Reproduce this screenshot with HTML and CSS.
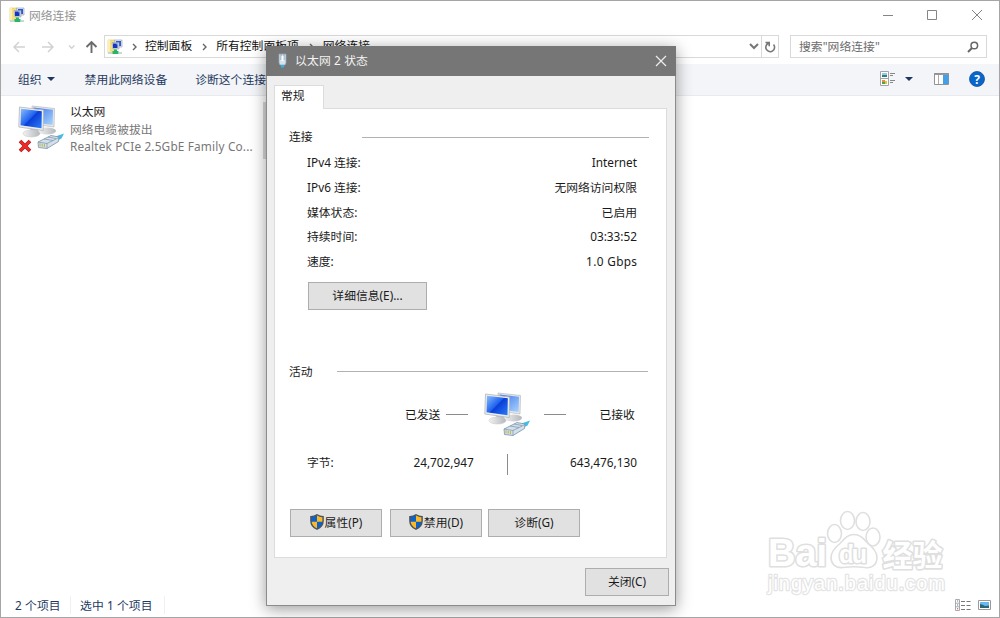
FILE: index.html
```html
<!DOCTYPE html>
<html lang="zh-CN">
<head>
<meta charset="utf-8">
<title>网络连接</title>
<link rel="stylesheet" href="styles.css">
</head>
<body>
<svg width="0" height="0" class="defs">
  <defs>
    <linearGradient id="screen" x1="0" y1="0" x2="1" y2=".9"><stop offset="0" stop-color="#8cc0fd"/><stop offset=".5" stop-color="#1d60ee"/><stop offset=".53" stop-color="#0a3ed6"/><stop offset="1" stop-color="#2877f6"/></linearGradient>
    <linearGradient id="screen2" x1="0" y1="0" x2="1" y2="1"><stop offset="0" stop-color="#3e73ea"/><stop offset="1" stop-color="#a8d4fd"/></linearGradient>
    <linearGradient id="base" x1="0" y1="0" x2="1" y2="0"><stop offset="0" stop-color="#f1f1f1"/><stop offset="1" stop-color="#b4b8bc"/></linearGradient>
    <symbol id="net" viewBox="0 0 46 46">
      <ellipse cx="29" cy="26" rx="9" ry="3.400" fill="url(#base)"/>
      <path d="M14 1 36.500 3.500 36 22 15 19z" fill="#e4e7e9" stroke="#b6babf" stroke-width=".7"/>
      <path d="M15.500 2.600 35 4.800 34.600 20 16 17.500z" fill="url(#screen2)"/>
      <path d="m12 22 8 1 1 6-8 1z" fill="#bfc3c7"/>
      <ellipse cx="13.500" cy="28.500" rx="8.500" ry="3.500" fill="url(#base)" stroke="#c2c4c7" stroke-width=".5"/>
      <path d="M1.500 2 25.500 5 25.200 25.500 .8 22z" fill="#eceeef" stroke="#b1b5b9" stroke-width=".8"/>
      <path d="M3 3.700 23.800 6.300 23.500 23.200 2.500 20.200z" fill="url(#screen)"/>
      <path d="m36 32 10-3.500-2.500 5-6 3z" fill="#43bde5"/>
      <path d="m20 37 13-6.500 8 1.500-.5 4.500L29 43.500l-8.500-1z" fill="#d3dfe9" stroke="#7893ab" stroke-width=".8"/>
      <path d="m20 37 9 1.500 12-6M29 38.500v5M26 34l9 1.500M30 32l8 1.500" fill="none" stroke="#7893ab" stroke-width=".7"/>
      <path d="M22 38.300v3M24.200 38.700v3M26.400 39v3" stroke="#c0b646"/>
    </symbol>
    <symbol id="folder" viewBox="0 0 16 16">
      <path d="M1 1h7v13H1z" fill="#f4df83" stroke="#dfc35b" stroke-width=".6"/><path d="M1 1h2v13H1z" fill="#fbefb5"/>
      <path d="M7.500 1H15v7H8z" fill="#dfe4e8" stroke="#9fa9b3" stroke-width=".7"/><path d="M9 2h5v5H9z" fill="#2a5ad6"/>
      <path d="M5 3.500h7V10H6z" fill="#d5dbe1" stroke="#929ca7" stroke-width=".6"/><path d="M6 4.500h4.500V9H6z" fill="#1533c4"/><path d="m8.500 4.500 2 1.500v-1.500z" fill="#8fc2f8"/>
      <path d="M7 10.500h3V12h1.500v3h-6v-3H7z" fill="#28b56b"/><path d="M1 13h4v2H1zM12 13h3v2h-3z" fill="#c5dad0"/>
    </symbol>
    <symbol id="shield" viewBox="0 0 14 16">
      <path d="M7 .8C5 2.200 3 2.700.9 2.700V7c0 4 2.500 6.700 6.100 8.200C10.600 13.700 13.100 11 13.100 7V2.700C11 2.700 9 2.200 7 .8z" fill="#0d62c9"/>
      <path d="M7 .8C9 2.200 11 2.700 13.100 2.700V7.800H7zM7 7.800v7.400C3.900 13.800 1.500 11.500 1 7.800z" fill="#fbb827"/>
      <path d="M7 .8C5 2.200 3 2.700.9 2.700V7c0 4 2.500 6.700 6.100 8.200C10.600 13.700 13.100 11 13.100 7V2.700C11 2.700 9 2.200 7 .8z" fill="none" stroke="#49545f" stroke-width="1.400"/>
    </symbol>
  </defs>
</svg>
<main class="window">
  <header class="titlebar">
    <svg class="app-icon"><use href="#folder"/></svg><span class="title">网络连接</span>
    <svg class="captions" viewBox="0 0 100 14" fill="none" stroke="#858585"><path d="M0 7.500h10"/><path d="M44.500 2.500h9v9h-9z"/><path d="m89 2 10 10m0-10L89 12"/></svg>
  </header>
  <nav class="navbar">
    <svg class="arrows" viewBox="0 0 86 14" fill="none" stroke="#d2d2d2" stroke-width="1.500"><path d="M12 7H1m5-5L1 7l5 5M29 7h11m-5-5 5 5-5 5"/><path d="m56 5.500 2.700 2.700 2.700-2.700"/><path d="M78.500 13V2M73.500 7l5-5 5 5" stroke="#6b6b6b" stroke-width="1.900"/></svg>
    <div class="address">
      <svg class="addr-icon"><use href="#folder"/></svg>
      <svg class="chev" viewBox="0 0 5 8"><path d="m1 1 3 3-3 3"/></svg><span>控制面板</span>
      <svg class="chev" viewBox="0 0 5 8"><path d="m1 1 3 3-3 3"/></svg><span>所有控制面板项</span>
      <svg class="chev" viewBox="0 0 5 8"><path d="m1 1 3 3-3 3"/></svg><span>网络连接</span>
      <svg class="drop" viewBox="0 0 10 7"><path d="m1 1 4 4 4-4" fill="none" stroke="#777" stroke-width="2"/></svg>
      <div class="refresh"><svg viewBox="0 0 12 12" width="12" height="12" fill="none" stroke="#777" stroke-width="1.600"><path d="M4.300 2.300A4.400 4.400 0 1 0 9.600 3.500M1.500 1.500h3.700v3.700"/></svg></div>
    </div>
    <div class="search"><span>搜索"网络连接"</span><svg viewBox="0 0 12 12" width="12" height="12" fill="none" stroke="#666" stroke-width="1.500"><circle cx="7.300" cy="4.500" r="3.300"/><path d="M5 7 1 11" stroke-width="2"/></svg></div>
  </nav>
  <div class="toolbar">
    <span class="organize">组织</span><i class="tri"></i><span class="t-disable">禁用此网络设备</span><span>诊断这个连接</span>
    <svg class="tools" viewBox="0 0 106 18">
      <path d="M.5 1.500h8v14h-8zM.5 8.500h8" fill="#fff" stroke="#a3a3a3"/><path d="M2 3h5v4H2z" fill="#8dccef"/><path d="M2 5h5v2H2z" fill="#387b7c"/><path d="M2 10h3v2H2z" fill="#e78e3a"/><path d="M2 12h3v2H2z" fill="#4aa44a"/><path d="M5 11h2v3H5z" fill="#e4c33c"/>
      <path d="M10 3.500h5m-5 2h3m-3 5h5m-5 2h3" stroke="#888"/><path d="M25 7h8l-4 4z" fill="#1d355f"/>
      <path d="M54.500 3.500h14v11h-14z" fill="#fff" stroke="#929292"/><path d="M54 4.200h15" stroke="#929292" stroke-width="1.500"/><path d="M58.500 5v9" stroke="#aaa"/><path d="M63 5h5.500v9H63z" fill="#41a0e8"/>
      <circle cx="97" cy="9" r="7.500" fill="#0866ca" stroke="#16529c" stroke-width=".8"/><text x="97" y="13.500" text-anchor="middle" class="help">?</text>
    </svg>
  </div>
  <section class="content">
    <article class="adapter">
      <div class="adapter-icon"><svg class="net"><use href="#net"/></svg><svg class="cross" viewBox="0 0 14 14"><path d="m2 2 10 10M12 2 2 12" stroke="#b81417" stroke-width="3.600"/><path d="m2.500 2.500 9 9m0-9-9 9" stroke="#ee2b2b" stroke-width="2.400"/></svg></div>
      <div class="adapter-text"><div class="name">以太网</div><div>网络电缆被拔出</div><div class="device">Realtek PCIe 2.5GbE Family Co...</div></div>
    </article>
    <div class="next-item"></div>
  </section>
  <footer class="status"><span class="count">2 个项目</span><span class="selected">选中 1 个项目</span>
    <svg class="views" viewBox="0 0 38 14"><path d="M.5 1.500h4v11h-4zM.5 5.200h4M.5 8.800h4" fill="#fff" stroke="#aaa"/><path d="M2 3h1.200" stroke="#777"/><path d="M2 7h1.200" stroke="#3579dd"/><path d="M2 10.800h1.200" stroke="#dd3838"/><path d="M6 3.500h4m1.500 0h4m-9.500 4h4m1.500 0h4m-9.500 4h4m1.500 0h4" stroke="#777"/><path d="M23.500 2.500h12v9h-12z" fill="#fff" stroke="#9a9a9a"/><path d="M25 4h9v6h-9z" fill="#68b8f4"/><path d="M25 6q3 .5 5 2l4-.5V10h-9z" fill="#2f6475"/></svg>
  </footer>
</main>

<svg class="watermark" viewBox="0 0 190 95">
  <g fill="#fff" stroke="#dfdfdf" stroke-width="1.600">
    <text x="6" y="61" class="wm-bai" textLength="59">Bai</text>
    <ellipse cx="72.500" cy="28.500" rx="7" ry="9"/><ellipse cx="85.500" cy="15.500" rx="7" ry="9"/><ellipse cx="101" cy="16.500" rx="7" ry="9"/><ellipse cx="111" cy="32" rx="7" ry="9"/>
    <path d="M92 29.500c7 0 10 5 14 9 5 4 9 8 9 14 0 8-6 11-12 10-8-1-14-1-22 0-8 1-12-4-12-10s4-10 9-14c4-4 7-9 14-9z"/>
    <text x="77" y="57.500" class="wm-du" textLength="28">du</text>
    <text x="120.500" y="60.500" class="wm-cn" textLength="60">经验</text>
  </g>
  <text x="6" y="85" class="wm-url" textLength="177">jingyan.baidu.com</text>
</svg>

<section class="dialog">
  <header class="dialog-title">
    <svg class="plug" viewBox="0 0 10 16"><path d="M1 1h7v9l-1 2H2l-1-2z" fill="#d7e3ed" stroke="#8fa5b8" stroke-width=".8"/><path d="M3 1v6M6 1v6" stroke="#7790a6" stroke-width=".8"/><path d="M3.500 3h2v5h-2z" fill="#fff"/><path d="M3 12h3v2.500H3z" fill="#30b4e4"/></svg>
    <span>以太网 2 状态</span>
    <svg class="x" viewBox="0 0 12 12"><path d="m1 1 10 10M11 1 1 11" stroke="#eee" stroke-width="1.200"/></svg>
  </header>
  <div class="dialog-body">
    <div class="tab">常规</div>
    <div class="panel">
      <div class="group g-conn"><span>连接</span><i></i></div>
      <dl class="facts">
        <dt>IPv4 连接:</dt><dd>Internet</dd><dt>IPv6 连接:</dt><dd>无网络访问权限</dd><dt>媒体状态:</dt><dd>已启用</dd><dt>持续时间:</dt><dd>03:33:52</dd><dt>速度:</dt><dd class="speed">1.0 Gbps</dd>
      </dl>
      <button class="btn details">详细信息(E)...</button>
      <div class="group g-act"><span>活动</span><i></i></div>
      <div class="traffic"><span>已发送</span><i></i><svg class="net"><use href="#net"/></svg><i class="right"></i><span class="recv">已接收</span></div>
      <div class="bytes"><span>字节:</span><span class="sent">24,702,947</span><i></i><span class="got">643,476,130</span></div>
      <div class="actions"><button class="btn"><svg class="shield"><use href="#shield"/></svg>属性(P)</button><button class="btn"><svg class="shield"><use href="#shield"/></svg>禁用(D)</button><button class="btn diag">诊断(G)</button></div>
    </div>
    <button class="btn close">关闭(C)</button>
  </div>
</section>
</body>
</html>
```
FILE: styles.css
```css
* { box-sizing: border-box; }
body { margin: 0; width: 1000px; height: 618px; overflow: hidden; font: 11.8px/18px "Noto Sans", "Noto Sans CJK SC", sans-serif; color: #1a1a1a; }
span, dt, dd, .btn { white-space: nowrap; }
svg { flex: none; display: block; }
.defs { position: absolute; }

.window { width: 1000px; height: 618px; border: 1px solid #a5a5a5; background: #fff; display: flex; flex-direction: column; }
.titlebar { height: 34px; display: flex; align-items: center; padding: 0 0 6px 8px; }
.app-icon { width: 16px; height: 16px; }
.title { margin-left: 4px; padding-bottom: 1px; color: #929292; }
.captions { width: 100px; height: 14px; margin: 0 16px 0 auto; }
.navbar { height: 23px; display: flex; align-items: center; padding-left: 12px; }
.arrows { width: 86px; height: 14px; }
.address { width: 675px; height: 23px; margin-left: 5px; border: 1px solid #d9d9d9; display: flex; align-items: center; padding-left: 2px; color: #111; }
.address span { padding-bottom: 3px; }
.search span { padding-bottom: 1px; letter-spacing: .05px; }
.addr-icon { width: 16px; height: 16px; }
.chev { width: 5px; height: 8px; margin: 0 9px 0 10px; fill: none; stroke: #666; stroke-width: 1.4; }
.addr-icon + .chev { margin: 0 8px 0 9px; }
.drop { width: 10px; height: 7px; margin-left: auto; margin-right: 2px; }
.refresh { width: 17px; height: 21px; border-left: 1px solid #d9d9d9; display: grid; place-items: center; }
.search { width: 197px; height: 23px; margin-left: 11px; border: 1px solid #d9d9d9; display: flex; align-items: center; justify-content: space-between; padding: 0 7px 0 8px; color: #6b6b6b; }
.toolbar { height: 32px; margin-top: 6px; background: #f4f5f8; border-bottom: 1px solid #e8eaed; display: flex; align-items: center; padding: 0 0 2px 17px; color: #1e3961; }
.tri { border: 4px solid transparent; border-top-color: #1d355f; border-bottom: 0; margin-left: 5px; }
.t-disable { margin: 0 28px 0 30px; }
.tools { width: 106px; height: 18px; margin: 0 13px 0 auto; }
.help { font: bold 12px "Noto Sans", sans-serif; fill: #fff; }
.content { flex: 1; display: flex; align-items: flex-start; padding: 6px 0 0 17px; }
.adapter { display: flex; width: 245px; }
.adapter-icon { position: relative; width: 46px; height: 52px; padding-top: 3px; }
.net { width: 46px; height: 46px; }
.cross { position: absolute; left: 0; top: 37px; width: 14px; height: 14px; }
.adapter-text { margin-left: 6px; padding-top: 1px; color: #777; line-height: 17.6px; white-space: nowrap; }
.name { color: #1a1a1a; }
.device { letter-spacing: .17px; }
.next-item { width: 10px; height: 57px; background: #d9d9d9; }
.status { height: 25px; display: flex; align-items: center; padding: 0 6px 0 14px; color: #1e3961; letter-spacing: .1px; }
.count { width: 56px; border-right: 1px solid #f0f0f0; }
.selected { width: 94px; padding-left: 9px; border-right: 1px solid #f0f0f0; }
.views { width: 38px; height: 14px; margin-left: auto; }

.watermark { position: absolute; left: 762px; top: 505px; width: 190px; height: 95px; }
.watermark text { paint-order: stroke; stroke-linejoin: round; stroke-width: 3.2; }
.wm-bai { font: bold 38px "Liberation Sans", sans-serif; }
.wm-du { font: bold 25px "Liberation Sans", sans-serif; }
.wm-cn { font: bold 30px "Noto Sans CJK SC", sans-serif; }
.watermark .wm-url { font: 20px "Liberation Sans", sans-serif; fill: #fff; stroke: #e4e4e4; stroke-width: 2.4; }

.dialog { position: absolute; left: 266px; top: 46px; width: 410px; height: 560px; border: 1px solid #8c8c8c; background: #efefef; box-shadow: 0 3px 15px rgba(0,0,0,.4); display: flex; flex-direction: column; }
.dialog-title { height: 30px; margin: -1px -1px 0; background: #767676; color: #f4f4f4; display: flex; align-items: center; padding: 0 9px 0 12px; letter-spacing: .15px; }
.dialog-title span { padding-bottom: 2px; }
.plug { width: 10px; height: 16px; margin-right: 7px; }
.x { width: 12px; height: 12px; margin-left: auto; }
.dialog-body { padding: 9px 6px 0 7px; display: flex; flex-direction: column; }
.tab { position: relative; z-index: 1; width: 50px; height: 24px; padding: 0 0 0 6px; background: #fff; border: 1px solid #dcdcdc; border-bottom: 0; }
.panel { height: 450px; width: 393px; margin-top: -1px; border: 1px solid #dcdcdc; background: #fff; padding: 19px 0 0 14px; }
.group { display: flex; align-items: center; height: 18px; }
.group span { padding-bottom: 2px; }
.group i { height: 1px; background: #b2b2b2; }
.g-conn i { width: 287px; margin-left: 49px; }
.g-act i { width: 311px; margin-left: 24px; }
.facts { margin: 4px 29px 0 18px; display: grid; grid-template-columns: auto auto; grid-auto-rows: 24.7px; align-items: center; }
dd { margin: 0; text-align: right; }
.speed { letter-spacing: .35px; margin-right: -.35px; }
.btn { font: inherit; color: #1a1a1a; background: #e1e1e1; border: 1px solid #adadad; height: 28px; width: 92px; padding: 0 0 2px; display: flex; align-items: center; justify-content: center; }
.details { width: 119px; margin: 8.5px 0 0 19px; }
.g-act { margin-top: 53px; }
.g-act span { padding-bottom: 1px; }
.traffic { display: flex; align-items: center; height: 46px; margin: 11px 0 0 116px; }
.traffic span { padding-bottom: 1px; }
.traffic i { width: 22px; height: 1px; background: #8c8c8c; margin: 0 16px 0 6px; }
.traffic i.right { margin: 0 33px 0 14px; }
.bytes { display: flex; align-items: center; height: 22px; margin: 16px 29px 0 18px; }
.bytes span { padding-bottom: 5px; }
.sent { width: 140px; text-align: right; }
.bytes i { width: 1px; height: 21px; background: #8c8c8c; margin-left: 33px; }
.got { margin-left: auto; }
.actions { display: flex; margin: 33px 0 0 1px; gap: 8px; }
.diag { margin-left: -2px; }
.shield { width: 14px; height: 16px; margin-right: 1px; }
.close { width: 84px; margin: 10px 0 0 auto; }
```
